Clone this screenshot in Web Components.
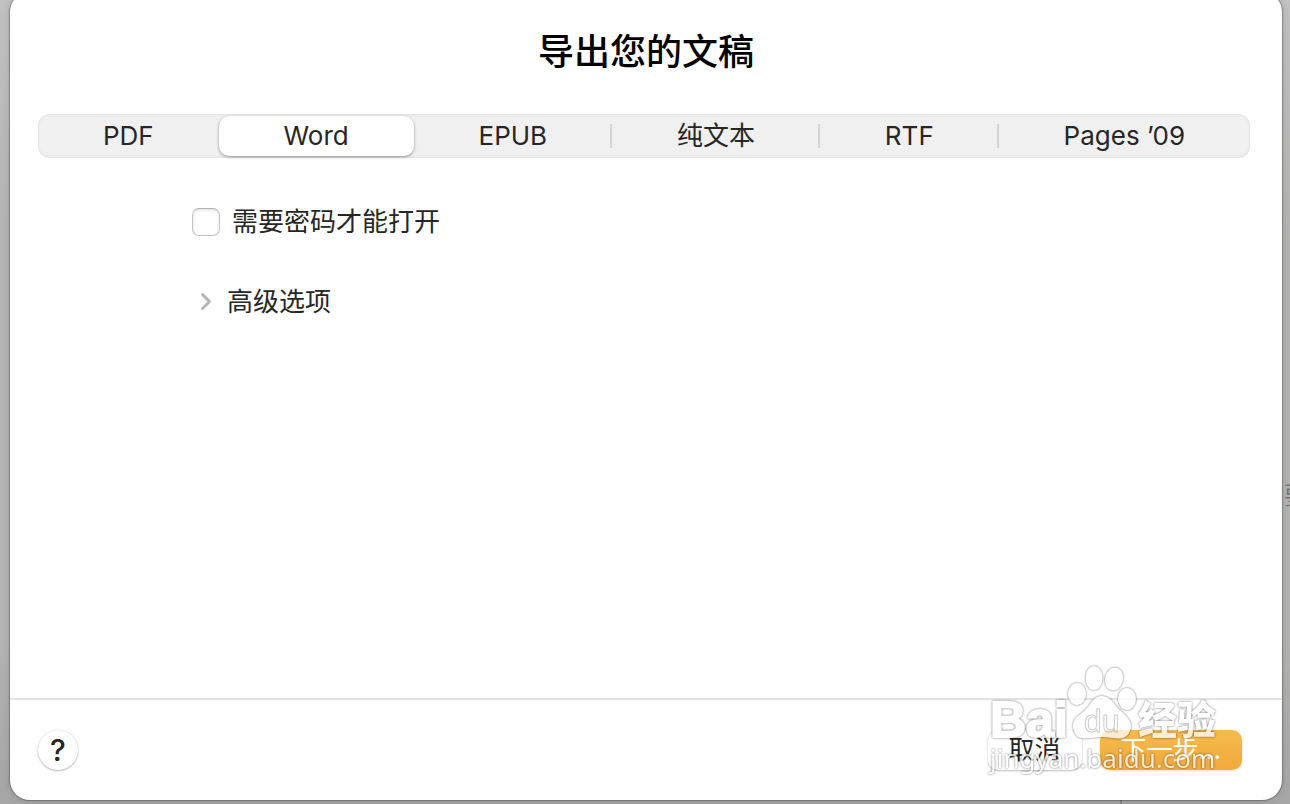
<!DOCTYPE html>
<html lang="zh-CN">
<head>
<meta charset="utf-8">
<meta name="viewport" content="width=device-width, initial-scale=1">
<title>导出您的文稿</title>
<style>
html {
   height: 100%;
}
body {
   margin: 0;
   height: 100%;
   font: 26px/32px Inter, "Noto Sans CJK SC", sans-serif;
   color: #262626;
}
</style>
</head>
<body>
<app-window>
   <span slot="behind">要</span>
   <export-dialog>
      <span slot="title">导出您的文稿</span>
      <segment-bar slot="formats">
         <segment-tab>PDF</segment-tab>
         <segment-tab selected>Word</segment-tab>
         <segment-tab divided>EPUB</segment-tab>
         <segment-tab divided>纯文本</segment-tab>
         <segment-tab divided>RTF</segment-tab>
         <segment-tab>Pages ’09</segment-tab>
      </segment-bar>
      <check-option>需要密码才能打开</check-option>
      <disclosure-row>高级选项</disclosure-row>
      <push-button slot="help" kind="round">?</push-button>
      <push-button slot="actions">取消</push-button>
      <push-button slot="actions" kind="primary">下一步...</push-button>
   </export-dialog>
   <water-mark slot="mark"></water-mark>
</app-window>

<script>
class AppWindow extends HTMLElement {
   constructor() {
      super();
      this.attachShadow({ mode: "open" }).innerHTML = `
<style>
:host {
   display: flex;
   position: relative;
   box-sizing: border-box;
   min-height: 100%;
   padding: 0 8px 4px 10px;
   overflow: hidden;
   background: linear-gradient(#c2c2c2, #b4b4b3 30%, #b4b4b3 80%, #a6a6a6);
}
.behind {
   position: absolute;
   left: calc(100% - 6px);
   top: 480px;
   font-size: 24px;
   color: #777;
}
.seam {
   position: absolute;
   right: 168px;
   bottom: 0;
   width: 2px;
   height: 4px;
   background: #888;
}
.mark {
   position: absolute;
   right: 60px;
   bottom: 24px;
   pointer-events: none;
}
</style>
<div class="behind"><slot name="behind"></slot></div>
<div class="seam"></div>
<slot></slot>
<div class="mark"><slot name="mark"></slot></div>`;
   }
}
customElements.define("app-window", AppWindow);

class ExportDialog extends HTMLElement {
   constructor() {
      super();
      this.attachShadow({ mode: "open" }).innerHTML = `
<style>
:host {
   display: flex;
   flex-direction: column;
   flex: 1;
   position: relative;
   margin-top: -8px;
   border-radius: 20px;
   background: #fff;
   box-shadow: 0 0 1px 1px rgba(0,0,0,.25), 0 0 10px rgba(0,0,0,.15);
}
h1 {
   margin: 0;
   padding: 36px 0 38px;
   font-size: 36px;
   line-height: 48px;
   font-weight: 500;
   text-align: center;
   color: #000;
}
.formats {
   padding: 0 32px 0 28px;
}
main {
   flex: 1;
   display: flex;
   flex-direction: column;
   align-items: flex-start;
   gap: 48px;
   padding: 48px 182px;
}
footer {
   display: flex;
   align-items: center;
   justify-content: space-between;
   border-top: 2px solid #e3e3e3;
   padding: 30px 40px 30px 28px;
}
.actions {
   display: flex;
   gap: 18px;
}
</style>
<h1><slot name="title"></slot></h1>
<div class="formats"><slot name="formats"></slot></div>
<main><slot></slot></main>
<footer>
   <slot name="help"></slot>
   <div class="actions"><slot name="actions"></slot></div>
</footer>`;
   }
}
customElements.define("export-dialog", ExportDialog);

class SegmentBar extends HTMLElement {
   constructor() {
      super();
      this.attachShadow({ mode: "open" }).innerHTML = `
<style>
:host {
   display: flex;
   box-sizing: border-box;
   height: 44px;
   padding: 2px 0;
   border-radius: 12px;
   background: #f0f0f0;
   box-shadow: inset 0 0 2px 1px #e2e2e2;
}
</style>
<slot></slot>`;
      this.addEventListener("click", (e) => {
         const tab = e.target.closest("segment-tab");
         if (!tab) return;
         for (const t of this.children) {
            t.toggleAttribute("selected", t === tab);
         }
      });
   }
}
customElements.define("segment-bar", SegmentBar);

class SegmentTab extends HTMLElement {
   static observedAttributes = ["selected"]

   constructor() {
      super();
      this.attachShadow({ mode: "open" }).innerHTML = `
<style>
:host {
   display: flex;
   flex: 1 1 auto;
}
button {
   flex: 1;
   padding: 0 60px;
   border: none;
   border-radius: 10px;
   background: none;
   font: inherit;
   color: inherit;
   white-space: nowrap;
}
:host([divided]) button {
   background: linear-gradient(#d4d4d4, #d4d4d4) right center / 2px 24px no-repeat;
   border-radius: 0;
}
:host([selected]) button {
   background: #fff;
   border-radius: 10px;
   box-shadow: 0 1px 3px rgba(0,0,0,.4);
}
</style>
<button type="button" aria-pressed="false"><slot></slot></button>`;
   }

   attributeChangedCallback() {
      this.shadowRoot.querySelector("button").setAttribute("aria-pressed", this.hasAttribute("selected"));
   }
}
customElements.define("segment-tab", SegmentTab);

class CheckOption extends HTMLElement {
   constructor() {
      super();
      this.attachShadow({ mode: "open" }).innerHTML = `
<style>
:host {
   display: block;
}
label {
   display: flex;
   align-items: center;
   gap: 12px;
}
input {
   appearance: none;
   box-sizing: border-box;
   width: 28px;
   height: 28px;
   margin: 0;
   border: 1px solid #c4c4c4;
   border-top-color: #b4b4b4;
   border-radius: 7px;
   background: #fff;
   box-shadow: inset 0 1px 3px rgba(0,0,0,.14);
}
input:checked {
   background: #f3b143;
}
</style>
<label for="box"><input id="box" type="checkbox"><slot></slot></label>`;
   }
}
customElements.define("check-option", CheckOption);

class DisclosureRow extends HTMLElement {
   constructor() {
      super();
      this.attachShadow({ mode: "open" }).innerHTML = `
<style>
:host {
   display: block;
}
button {
   display: flex;
   align-items: center;
   gap: 7px;
   padding: 0;
   border: none;
   background: none;
   font: inherit;
   color: inherit;
}
svg {
   display: block;
}
</style>
<button type="button" aria-expanded="false">
   <svg width="28" height="28" viewBox="0 0 28 28" fill="none" stroke="#b5b5b5" stroke-width="3" stroke-linecap="round" stroke-linejoin="round" aria-hidden="true"><path d="M10.5 6.5 17.5 13.5 10.5 20.5"/></svg>
   <slot></slot>
</button>`;
   }
}
customElements.define("disclosure-row", DisclosureRow);

class PushButton extends HTMLElement {
   constructor() {
      super();
      this.attachShadow({ mode: "open" }).innerHTML = `
<style>
:host {
   display: block;
}
button {
   display: block;
   height: 40px;
   padding: 0 21px;
   border: none;
   border-radius: 10px;
   background: #fff;
   font: inherit;
   color: inherit;
   box-shadow: 0 0 1px rgba(0,0,0,.25), 0 1px 2px rgba(0,0,0,.25);
}
:host([kind="primary"]) button {
   background: linear-gradient(#f6b94d, #f1aa3c);
   color: #fff;
   box-shadow: 0 1px 3px rgba(241,170,60,.4);
}
:host([kind="round"]) button {
   width: 40px;
   padding: 0;
   border-radius: 50%;
   font-size: 30px;
   font-weight: 500;
}
</style>
<button type="button"><slot></slot></button>`;
   }
}
customElements.define("push-button", PushButton);

class WaterMark extends HTMLElement {
   constructor() {
      super();
      this.attachShadow({ mode: "open" }).innerHTML = `
<style>
:host {
   display: block;
}
svg {
   display: block;
   overflow: visible;
   opacity: .75;
}
g {
   filter: drop-shadow(0 0 1px rgba(0,0,0,.75));
}
.word {
   font-family: "Liberation Sans", sans-serif;
   font-weight: 700;
}
.du {
   font-family: "Liberation Sans", sans-serif;
}
.han {
   font-family: "Noto Sans CJK SC", sans-serif;
   font-weight: 900;
}
.site {
   font-family: "Noto Sans", sans-serif;
}
</style>
<svg width="240" height="116" viewBox="0 0 240 116" fill="#fff" aria-hidden="true">
   <!-- paw -->
   <g>
      <ellipse cx="87" cy="30" rx="9" ry="11"/>
      <ellipse cx="104" cy="14" rx="8.5" ry="12"/>
      <ellipse cx="124" cy="15" rx="9" ry="11.5" transform="rotate(14 124 15)"/>
      <ellipse cx="137" cy="35" rx="9" ry="11"/>
      <path d="M112 32C102 32 101 42 93 48C84 54 81 60 84 67C88 79 101 73 112 73C123 73 135 79 140 67C143 60 139 54 132 48C124 42 122 32 112 32Z"/>
   </g>
   <g><text class="word" x="0" y="73" font-size="50" stroke="#fff" stroke-width="2">Bai</text></g>
   <g><text class="han" x="148" y="70" font-size="39">经验</text></g>
   <text class="du" x="94" y="68" font-size="32" stroke="#bbb">du</text>
   <g><text class="site" x="0" y="104" font-size="26">jingyan.baidu.com</text></g>
</svg>`;
   }
}
customElements.define("water-mark", WaterMark);
</script>
</body>
</html>
